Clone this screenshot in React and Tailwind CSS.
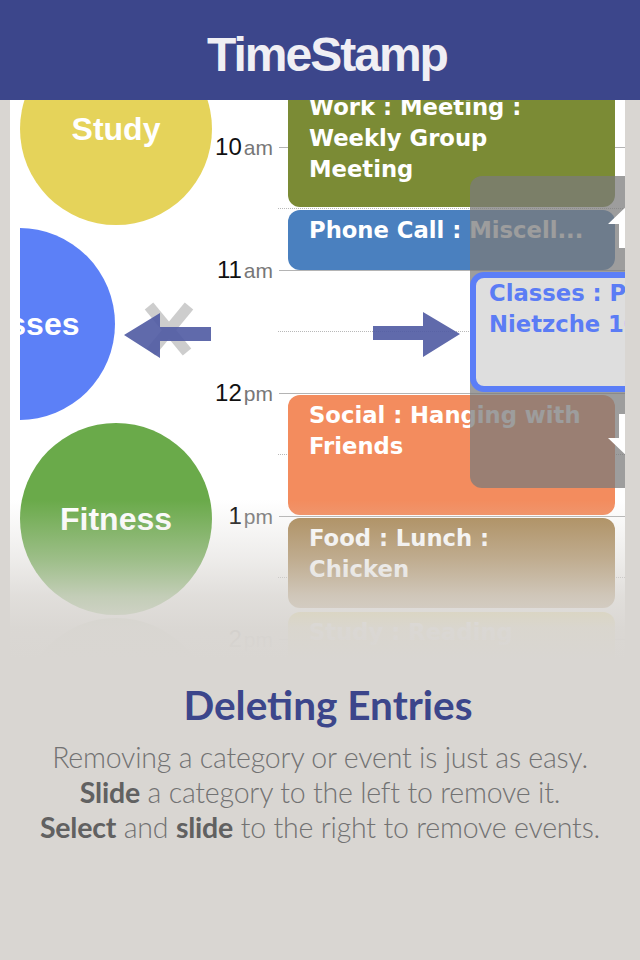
import React from "react";

const hours = [
  { num: "", suf: "" },
  { num: "10", suf: "am" },
  { num: "11", suf: "am" },
  { num: "12", suf: "pm" },
  { num: "1", suf: "pm" },
  { num: "2", suf: "pm" },
];

const TimeRow = ({ num, suf }) => (
  <div className="h-[123px] shrink-0">
    <div className="flex h-0 items-center">
      <span className="w-[61px] whitespace-nowrap text-right font-['Liberation_Sans',Arial,sans-serif] leading-none">
        <span className="text-[24px] text-[#111]">{num}</span>
        <span className="ml-[2px] text-[21px] text-[#777]">{suf}</span>
      </span>
      <div className="ml-[6px] h-px flex-1 bg-[#b4b4b4]" />
    </div>
    <div className="ml-[66px] mt-[61px] border-t border-dotted border-[#b8b8b8]" />
  </div>
);

const Circle = ({ color, label, shift }) => (
  <div
    className={`flex h-[192px] w-[192px] shrink-0 items-center justify-center rounded-full ${color} ${shift}`}
  >
    <span className="whitespace-nowrap font-['Liberation_Sans',Arial,sans-serif] text-[32px] font-bold text-white">
      {label}
    </span>
  </div>
);

const Event = ({ color, height, mt, lines }) => (
  <div
    className={`shrink-0 rounded-[12px] pl-[21px] pt-[5px] ${color} ${height} ${mt}`}
  >
    {lines.map((line) => (
      <p
        key={line}
        className="whitespace-nowrap font-['DejaVu_Sans',Verdana,sans-serif] text-[22.7px] font-bold leading-[31px] text-white"
      >
        {line}
      </p>
    ))}
  </div>
);

export default function App() {
  return (
    <div className="min-h-[960px] w-[640px] bg-[#d9d6d2]">
      {/* Title bar */}
      <div className="h-[100px] bg-[#3c468b] pl-[14px] pt-[31px] text-center">
        <h1 className="font-['Liberation_Sans',Arial,sans-serif] text-[48px] font-bold leading-none tracking-[-2px] text-[#f0eff4]">
          TimeStamp
        </h1>
      </div>

      {/* Phone screen */}
      <div className="relative h-[560px] overflow-hidden">
        <div className="relative ml-[10px] flex h-full w-[615px] overflow-hidden bg-white">
          {/* Categories */}
          <div className="ml-[10px] mt-[-67px] flex w-[192px] shrink-0 flex-col gap-[3px] overflow-hidden">
            <Circle color="bg-[#e5d35a]" label="Study" shift="" />
            <Circle color="bg-[#5c80f7]" label="Classes" shift="-translate-x-[97px]" />
            <Circle color="bg-[#6aaa4a]" label="Fitness" shift="" />
            <Circle color="bg-[#c9d3bd]" label="" shift="" />
          </div>

          {/* Timeline */}
          <div className="relative flex-1">
            <div className="mt-[-76px] flex flex-col">
              {hours.map((h, i) => (
                <TimeRow key={i} num={h.num} suf={h.suf} />
              ))}
            </div>

            <div className="absolute inset-y-0 left-[76px] flex w-[327px] flex-col">
              <Event
                color="bg-[#7b8b35]"
                height="h-[120px]"
                mt="mt-[-13px]"
                lines={["Work : Meeting :", "Weekly Group", "Meeting"]}
              />
              <Event
                color="bg-[#4a80bf]"
                height="h-[60px]"
                mt="mt-[3px]"
                lines={["Phone Call : Miscell..."]}
              />
              <Event
                color="bg-[#f38c5e]"
                height="h-[120px]"
                mt="mt-[125px]"
                lines={["Social : Hanging with", "Friends"]}
              />
              <Event
                color="bg-[#aa8957]"
                height="h-[90px]"
                mt="mt-[3px]"
                lines={["Food : Lunch :", "Chicken"]}
              />
              <Event
                color="bg-[#e5d35a]"
                height="h-[60px]"
                mt="mt-[4px]"
                lines={["Study : Reading"]}
              />
            </div>
          </div>

          {/* Slide-left hint */}
          <svg className="absolute left-[130px] top-[200px]" width="58" height="58" viewBox="0 0 58 58">
            <line x1="9" y1="6" x2="47" y2="52" stroke="#cdcdcd" strokeWidth="11" />
            <line x1="49" y1="6" x2="11" y2="52" stroke="#cdcdcd" strokeWidth="11" />
          </svg>
          <svg className="absolute left-[114px] top-[213px] opacity-90" width="87" height="46" viewBox="0 0 87 46">
            <polygon points="0,22 36,0 36,14 87,14 87,28 36,28 36,45" fill="#4f5aa3" />
          </svg>

          {/* Slide-right hint */}
          <svg className="absolute left-[363px] top-[212px] opacity-90" width="87" height="46" viewBox="0 0 87 46">
            <polygon points="87,22 50,0 50,14 0,14 0,28 50,28 50,45" fill="#4f5aa3" />
          </svg>

          {/* Dragged event */}
          <div className="absolute left-[460px] top-[76px] h-[312px] w-[190px] rounded-[12px] bg-[rgba(123,123,123,0.74)]" />
          <svg className="absolute left-[598px] top-[100px]" width="50" height="50" viewBox="0 0 50 50">
            <polygon points="0,24 25,0 50,24 39,24 39,48 11,48 11,24" fill="#ffffff" />
          </svg>
          <svg className="absolute left-[598px] top-[314px]" width="50" height="50" viewBox="0 0 50 50">
            <polygon points="11,0 39,0 39,24 50,24 25,48 0,24 11,24" fill="#ffffff" />
          </svg>
          <div className="absolute left-[460px] top-[172px] h-[120px] w-[220px] rounded-[14px] border-[6px] border-[#5b7ef7] bg-[#dedede] pl-[13px]">
            <p className="whitespace-nowrap font-['DejaVu_Sans',Verdana,sans-serif] text-[22.7px] font-bold leading-[31px] text-[#5b7cf5]">
              Classes : Philosophy
            </p>
            <p className="whitespace-nowrap font-['DejaVu_Sans',Verdana,sans-serif] text-[22.7px] font-bold leading-[31px] text-[#5b7cf5]">
              Nietzche 101
            </p>
          </div>
        </div>

        {/* Bottom fade */}
        <div className="absolute inset-x-0 top-[400px] h-[160px] bg-[linear-gradient(to_bottom,rgba(217,214,210,0)_0%,rgba(217,214,210,0.46)_37%,rgba(217,214,210,0.8)_60%,rgba(217,214,210,0.97)_80%,#d9d6d2_100%)]" />
      </div>

      {/* Caption */}
      <div className="pt-[23px] text-center font-['Lato',sans-serif]">
        <h2 className="pl-[16px] text-[40.5px] font-bold leading-[44px] text-[#3c468b]">
          Deleting Entries
        </h2>
        <div className="mt-[13px] text-[28.5px] font-light leading-[35px] tracking-[-0.2px] text-[#727272]">
          <p>Removing a category or event is just as easy.</p>
          <p>
            <span className="font-bold text-[#616161]">Slide</span> a category to the left to remove it.
          </p>
          <p>
            <span className="font-bold text-[#616161]">Select</span> and{" "}
            <span className="font-bold text-[#616161]">slide</span> to the right to remove events.
          </p>
        </div>
      </div>
    </div>
  );
}
